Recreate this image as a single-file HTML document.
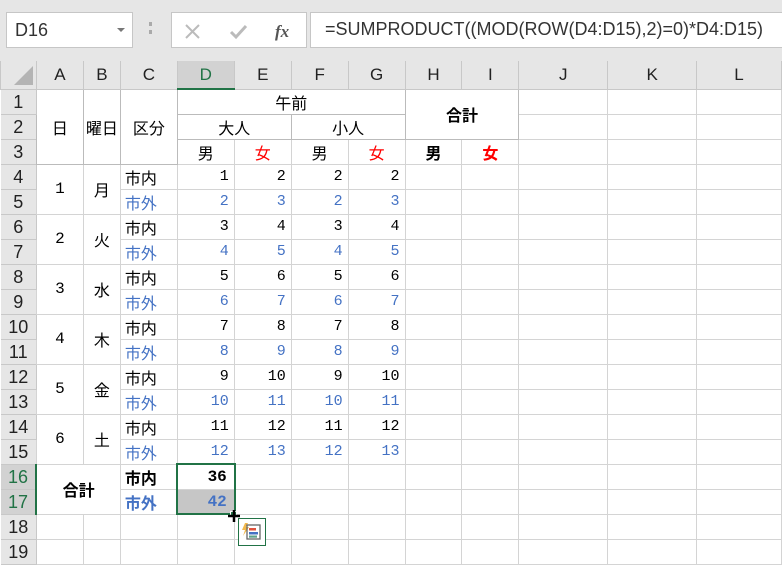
<!DOCTYPE html>
<html><head><meta charset="utf-8">
<style>
*{margin:0;padding:0;box-sizing:border-box}
body{width:782px;height:553px;overflow:hidden;background:#e6e6e6;font-family:"Liberation Sans","Noto Sans CJK JP",sans-serif;position:relative}
.box{position:absolute;background:#fff;border:1px solid #c6c6c6}
table{position:absolute;left:0;top:61px;border-collapse:collapse;table-layout:fixed;background:#fff}
td{border:1px solid #d4d4d4;height:25px;font-size:16px;color:#000;text-align:center;white-space:nowrap;overflow:hidden;padding:0;font-family:"Noto Sans CJK JP","Liberation Sans",sans-serif;line-height:18px}
tr.h td{background:#e6e6e6;height:28px;font-family:"Liberation Sans",sans-serif;font-size:17px;color:#222;border-color:#c8c8c8;border-top:none}
td.rh{background:#e6e6e6;font-family:"Liberation Sans",sans-serif;font-size:18px;color:#222;text-align:center;border-color:#c8c8c8;border-left:none}
.n{text-align:right;padding-right:5px;font-family:"Liberation Mono","Liberation Sans",sans-serif;font-size:15px}
.b{color:#4472c4}
.r{color:#ff0000}
.l{text-align:left;padding-left:4px}
.bd{font-weight:bold}
</style></head><body>
<div class="box" style="left:6px;top:12px;width:127px;height:36px"><span style="position:absolute;left:8px;top:7px;font-size:18px;color:#333">D16</span><span style="position:absolute;left:110px;top:15px;border-left:4px solid transparent;border-right:4px solid transparent;border-top:4px solid #777"></span></div>
<div style="position:absolute;left:149px;top:22px;width:4px;height:12px;border-left:3px dotted #aaa"></div>
<div class="box" style="left:171px;top:12px;width:136px;height:36px">
<svg width="136" height="36" style="position:absolute;left:0;top:0"><path d="M14 12 L27 25 M27 12 L14 25" stroke="#bbb" stroke-width="2"/><path d="M59 19 L64 24 L74 13" stroke="#bbb" stroke-width="3" fill="none"/><text x="103" y="24" font-family="Liberation Serif" font-style="italic" font-weight="bold" font-size="17" fill="#555">fx</text></svg></div>
<div class="box" style="left:310px;top:12px;width:480px;height:36px"><span style="position:absolute;left:14px;top:6px;font-size:18px;color:#333;white-space:nowrap">=SUMPRODUCT((MOD(ROW(D4:D15),2)=0)*D4:D15)</span></div>
<table>
<colgroup><col style="width:36px"><col style="width:47px"><col style="width:37px"><col style="width:57px"><col style="width:57px"><col style="width:57px"><col style="width:57px"><col style="width:57px"><col style="width:57px"><col style="width:57px"><col style="width:89px"><col style="width:89px"><col style="width:85px"></colgroup>
<tr class="h"><td style="position:relative"><svg width="30" height="26" style="position:absolute;left:2px;top:0"><path d="M11 24 L31 24 L31 4 Z" fill="#b4b4b4"/></svg></td><td>A</td><td>B</td><td>C</td><td style="background:#d2d2d2;border-bottom:2px solid #217346;color:#217346">D</td><td>E</td><td>F</td><td>G</td><td>H</td><td>I</td><td>J</td><td>K</td><td>L</td></tr>
<tr><td class="rh">1</td><td rowspan="3" style="border-color:#bbb">日</td><td rowspan="3" style="border-color:#bbb">曜日</td><td rowspan="3" style="border-color:#bbb">区分</td><td colspan="4" style="border-color:#bbb">午前</td><td colspan="2" rowspan="2" class="bd" style="border-color:#bbb">合計</td><td></td><td></td><td></td></tr>
<tr><td class="rh">2</td><td colspan="2" style="border-color:#bbb">大人</td><td colspan="2" style="border-color:#bbb">小人</td><td></td><td></td><td></td></tr>
<tr><td class="rh">3</td><td>男</td><td class="r">女</td><td>男</td><td class="r">女</td><td class="bd">男</td><td class="bd r">女</td><td></td><td></td><td></td></tr>
<tr><td class="rh">4</td><td rowspan="2" style="font-family:'Liberation Mono'">1</td><td rowspan="2">月</td><td class="l">市内</td><td class="n">1</td><td class="n">2</td><td class="n">2</td><td class="n">2</td><td></td><td></td><td></td><td></td><td></td></tr>
<tr><td class="rh">5</td><td class="l b">市外</td><td class="n b">2</td><td class="n b">3</td><td class="n b">2</td><td class="n b">3</td><td></td><td></td><td></td><td></td><td></td></tr>
<tr><td class="rh">6</td><td rowspan="2" style="font-family:'Liberation Mono'">2</td><td rowspan="2">火</td><td class="l">市内</td><td class="n">3</td><td class="n">4</td><td class="n">3</td><td class="n">4</td><td></td><td></td><td></td><td></td><td></td></tr>
<tr><td class="rh">7</td><td class="l b">市外</td><td class="n b">4</td><td class="n b">5</td><td class="n b">4</td><td class="n b">5</td><td></td><td></td><td></td><td></td><td></td></tr>
<tr><td class="rh">8</td><td rowspan="2" style="font-family:'Liberation Mono'">3</td><td rowspan="2">水</td><td class="l">市内</td><td class="n">5</td><td class="n">6</td><td class="n">5</td><td class="n">6</td><td></td><td></td><td></td><td></td><td></td></tr>
<tr><td class="rh">9</td><td class="l b">市外</td><td class="n b">6</td><td class="n b">7</td><td class="n b">6</td><td class="n b">7</td><td></td><td></td><td></td><td></td><td></td></tr>
<tr><td class="rh">10</td><td rowspan="2" style="font-family:'Liberation Mono'">4</td><td rowspan="2">木</td><td class="l">市内</td><td class="n">7</td><td class="n">8</td><td class="n">7</td><td class="n">8</td><td></td><td></td><td></td><td></td><td></td></tr>
<tr><td class="rh">11</td><td class="l b">市外</td><td class="n b">8</td><td class="n b">9</td><td class="n b">8</td><td class="n b">9</td><td></td><td></td><td></td><td></td><td></td></tr>
<tr><td class="rh">12</td><td rowspan="2" style="font-family:'Liberation Mono'">5</td><td rowspan="2">金</td><td class="l">市内</td><td class="n">9</td><td class="n">10</td><td class="n">9</td><td class="n">10</td><td></td><td></td><td></td><td></td><td></td></tr>
<tr><td class="rh">13</td><td class="l b">市外</td><td class="n b">10</td><td class="n b">11</td><td class="n b">10</td><td class="n b">11</td><td></td><td></td><td></td><td></td><td></td></tr>
<tr><td class="rh">14</td><td rowspan="2" style="font-family:'Liberation Mono'">6</td><td rowspan="2">土</td><td class="l">市内</td><td class="n">11</td><td class="n">12</td><td class="n">11</td><td class="n">12</td><td></td><td></td><td></td><td></td><td></td></tr>
<tr><td class="rh">15</td><td class="l b">市外</td><td class="n b">12</td><td class="n b">13</td><td class="n b">12</td><td class="n b">13</td><td></td><td></td><td></td><td></td><td></td></tr>
<tr><td class="rh" style="background:#d2d2d2;color:#217346;border-right:2px solid #217346">16</td><td colspan="2" rowspan="2" class="bd">合計</td><td class="l bd">市内</td><td class="n bd" style="font-size:16px;padding-right:7px">36</td><td></td><td></td><td></td><td></td><td></td><td></td><td></td><td></td></tr>
<tr><td class="rh" style="background:#d2d2d2;color:#217346;border-right:2px solid #217346">17</td><td class="l bd b">市外</td><td class="n bd b" style="background:#c6c6c6;font-size:16px;padding-right:7px">42</td><td></td><td></td><td></td><td></td><td></td><td></td><td></td><td></td></tr>
<tr><td class="rh">18</td><td></td><td></td><td></td><td></td><td></td><td></td><td></td><td></td><td></td><td></td><td></td><td></td></tr>
<tr><td class="rh">19</td><td></td><td></td><td></td><td></td><td></td><td></td><td></td><td></td><td></td><td></td><td></td><td></td></tr>
</table>
<div style="position:absolute;left:176px;top:463px;width:60px;height:52px;border:2px solid #217346"></div>
<div style="position:absolute;left:230px;top:511px;width:7px;height:7px;background:#217346;border:1px solid #fff"></div>
<svg style="position:absolute;left:227px;top:509px" width="14" height="14"><path d="M7 1 V13 M1 7 H13" stroke="#000" stroke-width="2.5"/></svg>
<div style="position:absolute;left:238px;top:518px;width:28px;height:28px;border:1px solid #217346;background:#fff">
<svg width="26" height="26"><path d="M6 4 L3 11 L6 11 L4 17 L10 8 L7 8 L9 4Z" fill="#f2b84b"/><rect x="8" y="6" width="13" height="14" fill="none" stroke="#666" stroke-width="1.3"/><rect x="10" y="9" width="7" height="2.5" fill="#e0533d"/><rect x="10" y="13" width="9" height="2.5" fill="#4472c4"/><rect x="10" y="16.5" width="8" height="2.2" fill="#5fa38a"/></svg></div>
</body></html>
